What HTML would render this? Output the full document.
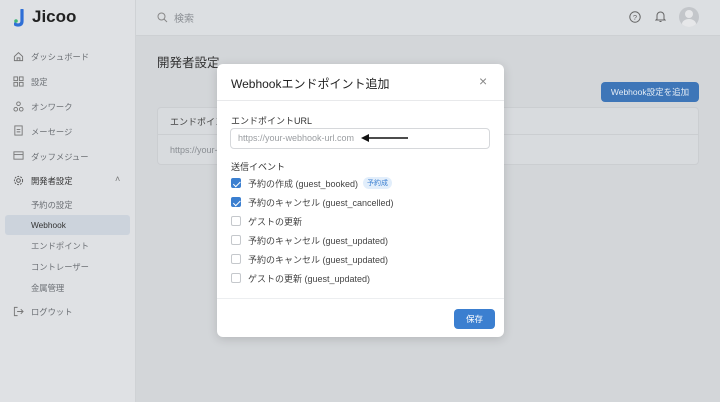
<!DOCTYPE html>
<html><head><meta charset="utf-8"><style>
*{box-sizing:border-box;margin:0;padding:0}
body{width:720px;height:402px;overflow:hidden;font-family:"Liberation Sans","Noto Sans CJK JP",sans-serif;background:#d3d6d9;position:relative;color:#333}
.abs{position:absolute}
.side{left:0;top:0;width:136px;height:402px;background:#dfe1e4;border-right:1px solid #cfd2d5}
.item{position:absolute;left:31px;font-size:8.3px;color:#6b6f74}
.ico{position:absolute;left:13px;width:11px;height:11px}
.sub{position:absolute;left:31px;font-size:8.3px;color:#6b6f74}
.modal{left:217px;top:64px;width:287px;height:273px;background:#fff;border-radius:6px;box-shadow:0 2px 10px rgba(0,0,0,.15)}
.row{position:absolute;left:14px;font-size:9px;color:#444;display:flex;align-items:center;height:12px}
.cb{width:10px;height:10px;border:1px solid #c5c8cc;border-radius:2px;margin-right:7px;background:#fff}
.cb.on{background:#3b7fd0;border-color:#3b7fd0;position:relative}
.cb.on:after{content:"";position:absolute;left:2.5px;top:0.5px;width:3px;height:5.5px;border:solid #fff;border-width:0 1.5px 1.5px 0;transform:rotate(45deg)}
</style></head><body>
<div class="abs side">
 <div class="abs" style="left:14px;top:9px;width:10px;height:16px">
  <svg width="12" height="18" viewBox="0 0 12 18"><path d="M8 1 V12 Q8 16 4 16 Q2 16 1 15" fill="none" stroke="#2f6fd6" stroke-width="3.2" stroke-linecap="round"/><circle cx="2" cy="12" r="1.8" fill="#3fb57a"/></svg>
 </div>
 <div class="abs" style="left:32px;top:7px;font-size:17px;font-weight:bold;color:#222">Jicoo</div>
 <svg class="ico" style="top:51px" viewBox="0 0 12 12"><path d="M1.5 6 L6 1.8 L10.5 6 V10.5 H1.5Z M4.5 10.5 V7.5 H7.5 V10.5" fill="none" stroke="#777" stroke-width="1"/></svg>
 <div class="item" style="top:51px">ダッシュボード</div>
 <svg class="ico" style="top:76px" viewBox="0 0 12 12"><g fill="none" stroke="#777"><rect x="1" y="1" width="4" height="4"/><rect x="7" y="1" width="4" height="4"/><rect x="1" y="7" width="4" height="4"/><rect x="7" y="7" width="4" height="4"/></g></svg>
 <div class="item" style="top:76px">設定</div>
 <svg class="ico" style="top:101px" viewBox="0 0 12 12"><g fill="none" stroke="#777"><circle cx="6" cy="3" r="2"/><circle cx="3" cy="9" r="2"/><circle cx="9" cy="9" r="2"/></g></svg>
 <div class="item" style="top:101px">オンワーク</div>
 <svg class="ico" style="top:125px" viewBox="0 0 12 12"><g fill="none" stroke="#777"><rect x="2" y="1" width="8" height="10"/><path d="M4 5h4M4 7.5h4"/></g></svg>
 <div class="item" style="top:126px">メーセージ</div>
 <svg class="ico" style="top:150px" viewBox="0 0 12 12"><g fill="none" stroke="#777"><rect x="1" y="2" width="10" height="8"/><path d="M1 5h10"/></g></svg>
 <div class="item" style="top:151px">ダッフメジュー</div>
 <svg class="ico" style="top:175px" viewBox="0 0 12 12"><g fill="none" stroke="#555"><circle cx="6" cy="6" r="2"/><circle cx="6" cy="6" r="4.5" stroke-dasharray="2 1.3"/></g></svg>
 <div class="item" style="top:175px;color:#333">開発者設定</div>
 <div class="abs" style="left:115px;top:174px;font-size:9px;color:#777">˄</div>
 <div class="sub" style="top:199px">予約の設定</div>
 <div class="abs" style="left:5px;top:215px;width:125px;height:20px;background:#ccd3dc;border-radius:3px"></div>
 <div class="sub" style="top:220px;color:#333">Webhook</div>
 <div class="sub" style="top:240px">エンドポイント</div>
 <div class="sub" style="top:261px">コントレーザー</div>
 <div class="sub" style="top:282px">金属管理</div>
 <svg class="ico" style="top:306px" viewBox="0 0 12 12"><path d="M5 1.5H1.5V10.5H5M4.5 6H11M8.5 3.5L11 6L8.5 8.5" fill="none" stroke="#777"/></svg>
 <div class="item" style="top:306px">ログウット</div>
</div>
<div class="abs" style="left:136px;top:0;width:584px;height:36px;background:#dcdfe2;border-bottom:1px solid #cdd0d3"></div>
<svg class="abs" style="left:157px;top:12px" width="11" height="11" viewBox="0 0 11 11"><circle cx="4.5" cy="4.5" r="3.5" fill="none" stroke="#888"/><path d="M7 7L10 10" stroke="#888"/></svg>
<div class="abs" style="left:174px;top:10px;font-size:10px;color:#8a8e93">検索</div>
<svg class="abs" style="left:629px;top:11px" width="12" height="12" viewBox="0 0 12 12"><circle cx="6" cy="6" r="5.2" fill="none" stroke="#666"/><text x="6" y="8.8" font-size="7.5" text-anchor="middle" fill="#666" font-family="Liberation Sans">?</text></svg>
<svg class="abs" style="left:655px;top:10px" width="11" height="13" viewBox="0 0 11 13"><path d="M2 9V5.5A3.5 3.5 0 0 1 9 5.5V9L10 10H1Z M4.5 11.5H6.5" fill="none" stroke="#666"/></svg>
<div class="abs" style="left:679px;top:7px;width:20px;height:20px;border-radius:50%;background:#c3c6ca;overflow:hidden"><div class="abs" style="left:6px;top:3px;width:8px;height:8px;border-radius:50%;background:#e6e7e9"></div><div class="abs" style="left:3px;top:12px;width:14px;height:10px;border-radius:50%;background:#e6e7e9"></div></div>
<div class="abs" style="left:157px;top:52px;font-size:12.5px;color:#333">開発者設定</div>
<div class="abs" style="left:601px;top:82px;width:98px;height:20px;background:#3e76b8;border-radius:4px;color:#e4ecf5;font-size:8.5px;text-align:center;line-height:20px">Webhook設定を追加</div>
<div class="abs" style="left:157px;top:107px;width:542px;height:58px;background:#d8dbde;border:1px solid #cbced1;border-radius:4px"></div>
<div class="abs" style="left:157px;top:134px;width:542px;height:1px;background:#cbced1"></div>
<div class="abs" style="left:170px;top:115px;font-size:9px;color:#444">エンドポイント</div>
<div class="abs" style="left:170px;top:145px;font-size:9px;color:#8a8e93">https://your-</div>

<div class="abs modal">
 <div class="abs" style="left:14px;top:11px;font-size:12px;color:#222">Webhookエンドポイント追加</div>
 <div class="abs" style="left:262px;top:9px;font-size:14px;color:#888">×</div>
 <div class="abs" style="left:0;top:36px;width:287px;height:1px;background:#e8e9eb"></div>
 <div class="abs" style="left:14px;top:50px;font-size:9px;color:#333">エンドポイントURL</div>
 <div class="abs" style="left:13px;top:64px;width:260px;height:21px;border:1px solid #d6d8db;border-radius:4px"></div>
 <div class="abs" style="left:21px;top:69px;font-size:9px;color:#9a9da1">https://your-webhook-url.com</div>
 <svg class="abs" style="left:144px;top:69px" width="48" height="10" viewBox="0 0 48 10"><path d="M6 5H47" stroke="#111" stroke-width="1.6"/><path d="M0 5L8 1V9Z" fill="#111"/></svg>
 <div class="abs" style="left:14px;top:96px;font-size:9px;color:#333">送信イベント</div>
 <div class="row" style="top:113px"><span class="cb on"></span>予約の作成 (guest_booked)<span style="margin-left:5px;background:#e2eefb;color:#3b7fd0;font-size:7px;padding:1px 4px;border-radius:6px">予約成</span></div>
 <div class="row" style="top:132px"><span class="cb on"></span>予約のキャンセル (guest_cancelled)</div>
 <div class="row" style="top:151px"><span class="cb"></span>ゲストの更新</div>
 <div class="row" style="top:170px"><span class="cb"></span>予約のキャンセル (guest_updated)</div>
 <div class="row" style="top:189px"><span class="cb"></span>予約のキャンセル (guest_updated)</div>
 <div class="row" style="top:208px"><span class="cb"></span>ゲストの更新 (guest_updated)</div>
 <div class="abs" style="left:0;top:234px;width:287px;height:1px;background:#eceef0"></div>
 <div class="abs" style="left:237px;top:245px;width:41px;height:20px;background:#3b7fd0;border-radius:4px;color:#fff;font-size:8.5px;text-align:center;line-height:20px">保存</div>
</div>
</body></html>
